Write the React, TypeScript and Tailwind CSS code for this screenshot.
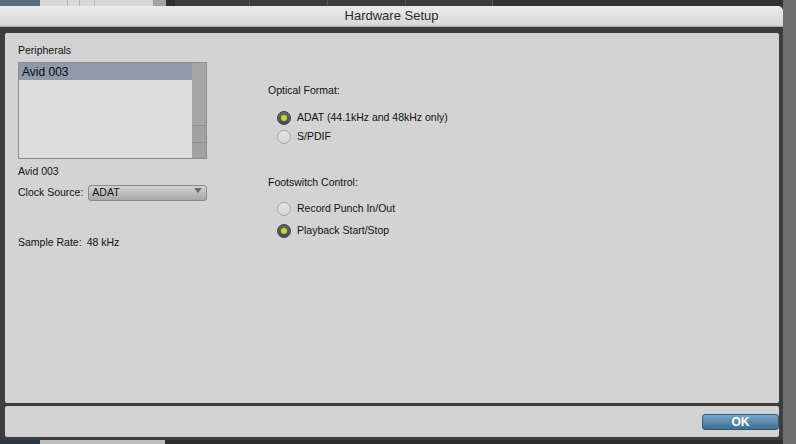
import React from "react";

const font = { fontFamily: '"Liberation Sans", Arial, sans-serif' };

function Radio({ checked, label, h }: { checked: boolean; label: string; h: string }) {
  return (
    <div className={`flex items-center pl-[9px] ${h}`}>
      {checked ? (
        <div className="w-[14px] h-[14px] rounded-full bg-gradient-to-b from-[#6a6a6a] to-[#4a4a4a] border border-[#3e3e3e] flex items-center justify-center">
          <div className="w-[6px] h-[6px] rounded-full bg-[#b5e03a]" />
        </div>
      ) : (
        <div className="w-[14px] h-[14px] rounded-full bg-gradient-to-b from-[#e4e4e4] to-[#d6d6d6] border border-[#a8a8a8]" />
      )}
      <span className="ml-[6px] text-[10.5px] text-[#111]">{label}</span>
    </div>
  );
}

export default function App() {
  return (
    <div className="w-[796px] h-[444px] overflow-hidden bg-[#3a3a3a] flex flex-col" style={font}>
      {/* background strip top */}
      <div className="h-[6px] flex shrink-0">
        <div className="w-[40px] bg-[#5b6a7c]" />
        <div className="w-[113px] bg-[#d9d9d9] flex">
          <div className="w-[28px] border-r border-[#b8b8b8]" />
          <div className="w-[12px] border-r border-[#b8b8b8]" />
          <div className="w-[15px] border-r border-[#b8b8b8]" />
        </div>
        <div className="w-[13px] bg-[#a3a3a3]" />
        <div className="w-[9px] bg-[#2e2e2e]" />
        <div className="w-[75px] bg-[#3c3c3c] border-r border-[#555]" />
        <div className="w-[78px] bg-[#3c3c3c] border-r border-[#555]" />
        <div className="w-[78px] bg-[#3c3c3c] border-r border-[#555]" />
        <div className="w-[87px] bg-[#3c3c3c] border-r border-[#555]" />
        <div className="flex-1 bg-[#333]" />
        <div className="w-[13px] bg-[#707070]" />
      </div>

      <div className="flex flex-1 min-h-0">
        {/* window */}
        <div className="w-[783px] flex flex-col">
          <div className="h-[21px] shrink-0 rounded-tr-[5px] bg-gradient-to-b from-[#ececec] to-[#d6d6d6] border-b border-[#a9a9a9] flex items-center justify-center">
            <span className="text-[13px] text-[#2a2a2a]">Hardware Setup</span>
          </div>
          <div className="flex-1 bg-[#3d3d3d] pl-[5px] pr-[4px] pt-[6px] pb-[3px] flex flex-col gap-[3px]">
            {/* main panel */}
            <div className="h-[370px] bg-[#d3d3d3] rounded-[2px] flex pl-[13px]">
              {/* left column */}
              <div className="w-[189px] flex flex-col pt-[10px]">
                <div className="text-[10.5px] leading-[14px] text-[#111]">Peripherals</div>
                <div className="mt-[5px] h-[97px] border border-[#8c8c8c] bg-[#dcdcdc] flex">
                  <div className="flex-1">
                    <div className="h-[17px] bg-[#8f99aa] flex items-center pl-[3px] text-[12px] text-[#0a0a0a]">Avid 003</div>
                  </div>
                  <div className="w-[14px] bg-[#a6a6a6] flex flex-col justify-end">
                    <div className="h-[17px] border-t border-[#8e8e8e] bg-[#a2a2a2]" />
                    <div className="h-[16px] border-t border-[#8e8e8e] bg-[#a2a2a2]" />
                  </div>
                </div>
                <div className="mt-[5px] text-[10.5px] leading-[14px] text-[#111]">Avid 003</div>
                <div className="mt-[7px] flex items-center">
                  <span className="text-[10.5px] text-[#111]">Clock Source:</span>
                  <div className="ml-[5px] flex-1 h-[16px] rounded-[3px] border border-[#8a8a8a] bg-gradient-to-b from-[#d2d2d2] to-[#a9a9a9] flex items-center justify-between px-[3px]">
                    <span className="text-[10.5px] text-[#111]">ADAT</span>
                    <svg width="8" height="6" viewBox="0 0 8 6" className="mb-[5px] mr-[1px]">
                      <path d="M0 0 L8 0 L4 5 Z" fill="#6a6a6a" />
                    </svg>
                  </div>
                </div>
                <div className="mt-[34px] text-[10.5px] leading-[14px] text-[#111]">
                  Sample Rate:<span className="ml-[5px]">48 kHz</span>
                </div>
              </div>

              {/* right column */}
              <div className="ml-[61px] flex flex-col pt-[50px]">
                <div className="text-[10.5px] leading-[14px] text-[#111]">Optical Format:</div>
                <div className="mt-[11px]">
                  <Radio checked label="ADAT (44.1kHz and 48kHz only)" h="h-[19px]" />
                  <Radio checked={false} label="S/PDIF" h="h-[19px]" />
                </div>
                <div className="mt-[29px] text-[10.5px] leading-[14px] text-[#111]">Footswitch Control:</div>
                <div className="mt-[10px] flex flex-col gap-[3px]">
                  <Radio checked={false} label="Record Punch In/Out" h="h-[19px]" />
                  <Radio checked label="Playback Start/Stop" h="h-[19px]" />
                </div>
              </div>
            </div>

            {/* bottom panel */}
            <div className="h-[31px] bg-[#d3d3d3] rounded-[2px] flex items-center justify-end">
              <div className="w-[77px] h-[16px] rounded-[3px] border border-[#2f5a7a] bg-gradient-to-b from-[#76a6c8] to-[#3f6f94] flex items-center justify-center">
                <span className="text-[12px] font-bold text-white">OK</span>
              </div>
            </div>
          </div>
        </div>
        <div className="flex-1 bg-[#707070]" />
      </div>

      {/* background strip bottom */}
      <div className="h-[4px] flex shrink-0">
        <div className="w-[40px] bg-[#2a3540]" />
        <div className="w-[125px] bg-[#bdbdbd]" />
        <div className="flex-1 bg-[#2e2e2e]" />
        <div className="w-[13px] bg-[#707070]" />
      </div>
    </div>
  );
}
